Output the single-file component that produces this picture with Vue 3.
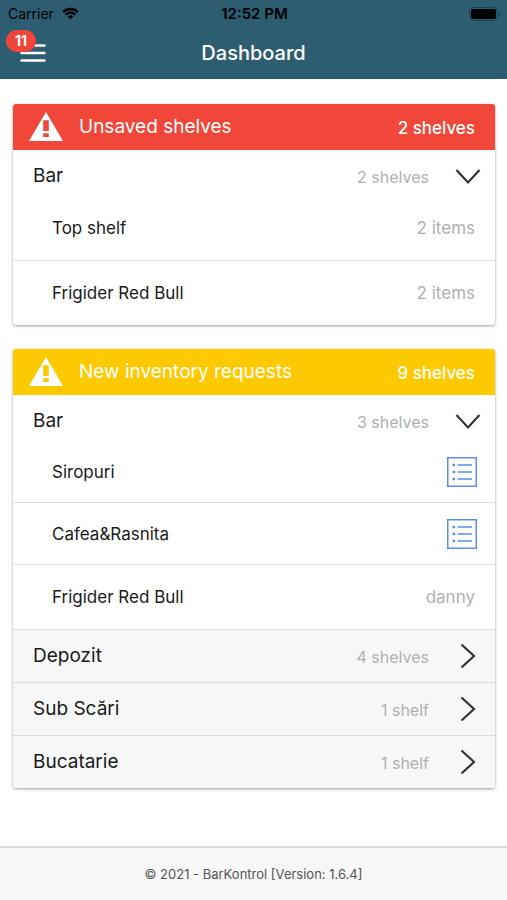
<template>
  <div class="page">
    <header class="top-bar">
      <div class="status-bar">
        <div class="carrier">
          <span>Carrier</span>
          <svg class="wifi" viewBox="0 0 18 13" aria-hidden="true">
            <path d="M1.2 4.9a11.2 11.2 0 0 1 15.6 0" />
            <path d="M3.9 7.7a7.4 7.4 0 0 1 10.2 0" />
            <path class="wifi-dot" d="M9 12.6l-2.9-2.9a4.2 4.2 0 0 1 5.8 0z" />
          </svg>
        </div>
        <span class="clock">12:52 PM</span>
        <svg class="battery" viewBox="0 0 32 14" aria-hidden="true">
          <rect class="battery-case" x="0.5" y="0.5" width="28" height="13" rx="4" />
          <rect x="2" y="2" width="25" height="10" rx="2" />
          <path class="battery-cap" d="M30 5a2.3 2.3 0 0 1 0 4z" />
        </svg>
      </div>
      <div class="nav-bar">
        <button type="button" class="menu-button" aria-label="Menu">
          <svg class="menu-icon" viewBox="0 0 26 20" aria-hidden="true">
            <path d="M1.5 2.5h23M1.5 10h23M1.5 17.5h23" />
          </svg>
          <span class="badge">11</span>
        </button>
        <h1 class="page-title">Dashboard</h1>
      </div>
    </header>

    <main class="content">
      <section v-for="card in cards" :key="card.title" class="card">
        <div class="card-header" :class="card.type">
          <svg class="warning-icon" viewBox="0 0 34 30" aria-hidden="true">
            <path
              fill-rule="evenodd"
              d="M17 0L34 29H0zM14.2 8.3v10.8h5.6V8.3zM14.2 21.3v3.8h5.6v-3.8z"
            />
          </svg>
          <h2 class="card-title">{{ card.title }}</h2>
          <span class="card-count">{{ card.count }}</span>
        </div>

        <div v-for="group in card.groups" :key="group.name" class="group">
          <button
            type="button"
            class="group-row"
            :class="{ open: group.open }"
            :aria-expanded="group.open"
            @click="toggle(group)"
          >
            <span class="group-name">{{ group.name }}</span>
            <span class="group-count">{{ group.count }}</span>
            <svg class="chevron" viewBox="0 0 26 26" aria-hidden="true">
              <path v-if="group.open" d="M1.5 7L13 19.5L24.5 7" />
              <path v-else d="M6.5 1.5L19 13L6.5 24.5" />
            </svg>
          </button>
          <ul v-if="group.open && group.items.length" class="items">
            <li v-for="item in group.items" :key="item.name" class="item" :class="{ compact: !item.note }">
              <span class="item-name">{{ item.name }}</span>
              <span v-if="item.note" class="item-note">{{ item.note }}</span>
              <button v-else type="button" class="list-button" :aria-label="item.name">
                <svg class="list-icon" viewBox="0 0 30 30" aria-hidden="true">
                  <rect x="0.75" y="0.75" width="28.5" height="28.5" />
                  <path d="M10.5 8h14.5M10.5 15h14.5M10.5 22h14.5" />
                  <path class="dots" d="M5.5 8h2.5M5.5 15h2.5M5.5 22h2.5" />
                </svg>
              </button>
            </li>
          </ul>
        </div>
      </section>
    </main>

    <footer class="footer">© 2021 - BarKontrol [Version: 1.6.4]</footer>
  </div>
</template>

<script setup>
import { ref } from 'vue';

const cards = ref([
  {
    title: 'Unsaved shelves',
    type: 'danger',
    count: '2 shelves',
    groups: [
      {
        name: 'Bar',
        count: '2 shelves',
        open: true,
        items: [
          { name: 'Top shelf', note: '2 items' },
          { name: 'Frigider Red Bull', note: '2 items' }
        ]
      }
    ]
  },
  {
    title: 'New inventory requests',
    type: 'warning',
    count: '9 shelves',
    groups: [
      {
        name: 'Bar',
        count: '3 shelves',
        open: true,
        items: [
          { name: 'Siropuri' },
          { name: 'Cafea&Rasnita' },
          { name: 'Frigider Red Bull', note: 'danny' }
        ]
      },
      { name: 'Depozit', count: '4 shelves', open: false, items: [] },
      { name: 'Sub Scări', count: '1 shelf', open: false, items: [] },
      { name: 'Bucatarie', count: '1 shelf', open: false, items: [] }
    ]
  }
]);

const toggle = (group) => {
  group.open = !group.open;
};
</script>

<style>
body {
  margin: 0;
  background: #fff;
}
</style>

<style scoped>
.page {
  display: flex;
  flex-direction: column;
  min-height: 100vh;
  font-family: Inter, "Liberation Sans", sans-serif;
  color: #1a1a1a;
}

button {
  padding: 0;
  border: 0;
  background: none;
  font: inherit;
  color: inherit;
  cursor: pointer;
}

/* header */
.top-bar {
  background: #2d5d70;
  color: #fff;
}

.status-bar {
  display: grid;
  grid-template-columns: 1fr auto 1fr;
  align-items: center;
  height: 27px;
  padding: 0 6px 0 8px;
  font-size: 14px;
  color: #000;
}

.carrier {
  display: flex;
  align-items: center;
  gap: 8px;
}

.wifi {
  width: 17px;
  height: 13px;
  fill: none;
  stroke: #000;
  stroke-width: 2.4;
}

.wifi .wifi-dot {
  fill: #000;
  stroke: none;
}

.clock {
  font-size: 15px;
  font-weight: 600;
}

.battery {
  justify-self: end;
  width: 32px;
  height: 14px;
}

.battery-case {
  fill: none;
  stroke: #1c414f;
}

.battery-cap {
  fill: #1c414f;
}

.nav-bar {
  display: grid;
  grid-template-columns: 1fr auto 1fr;
  align-items: center;
  height: 52px;
  padding: 0 20px;
}

.menu-button {
  position: relative;
  justify-self: start;
  width: 26px;
  height: 20px;
}

.menu-icon {
  display: block;
  width: 26px;
  height: 20px;
  stroke: #fff;
  stroke-width: 2.4;
  stroke-linecap: round;
}

.badge {
  position: absolute;
  top: -13px;
  left: -14px;
  width: 30px;
  border-radius: 11px;
  background: #f0453a;
  font-size: 14px;
  font-weight: 700;
  line-height: 22px;
  text-align: center;
  color: #fff;
}

.page-title {
  margin: 0;
  font-size: 20px;
  font-weight: 500;
}

/* cards */
.content {
  display: flex;
  flex: 1;
  flex-direction: column;
  gap: 24px;
  padding: 25px 12px 25px 13px;
}

.card {
  border-radius: 3px;
  overflow: hidden;
  background: #fff;
  box-shadow: 0 1px 3px rgba(0, 0, 0, 0.4);
}

.card-header {
  display: flex;
  align-items: center;
  height: 46px;
  padding: 0 20px 0 16px;
  color: #fff;
}

.card-header.danger {
  background: #f1473b;
}

.card-header.warning {
  background: #ffc900;
}

.warning-icon {
  width: 34px;
  height: 30px;
  margin-right: 16px;
  fill: #fff;
}

.card-title {
  flex: 1;
  padding-bottom: 2px;
  margin: 0;
  font-size: 19px;
  font-weight: 400;
}

.card-count {
  padding-top: 2px;
  font-size: 17px;
  font-weight: 500;
}

.group + .group {
  border-top: 1px solid #dedede;
}

.group-row {
  display: flex;
  align-items: center;
  width: 100%;
  height: 52px;
  padding: 0 14px 0 20px;
  background: #f7f7f7;
  text-align: left;
}

.group-row.open {
  height: 46px;
  padding-top: 6px;
  background: #fff;
}

.group-name {
  flex: 1;
  padding-bottom: 2px;
  font-size: 19px;
}

.group-count {
  padding-top: 2px;
  margin-right: 26px;
  font-size: 16px;
  color: #b0b0b0;
}

.chevron {
  width: 26px;
  height: 26px;
  fill: none;
  stroke: #333;
  stroke-width: 2.2;
}

.items {
  margin: 0;
  padding: 0;
  list-style: none;
}

.item {
  display: flex;
  align-items: center;
  justify-content: space-between;
  height: 64px;
  padding: 0 20px 0 39px;
  font-size: 17px;
}

.item.compact {
  height: 61px;
  padding-right: 18px;
}

.item + .item {
  border-top: 1px solid #dedede;
}

.item-note {
  color: #b0b0b0;
}

.list-button,
.list-icon {
  display: block;
  width: 30px;
  height: 30px;
}

.list-icon {
  fill: none;
  stroke: #5b8def;
  stroke-width: 1.5;
}

.list-icon .dots {
  stroke-width: 2.5;
}

/* footer */
.footer {
  padding: 18px 12px;
  border-top: 2px solid #d8d8d8;
  background: #f7f7f7;
  font-size: 13px;
  line-height: 16px;
  text-align: center;
  color: #555;
}
</style>
